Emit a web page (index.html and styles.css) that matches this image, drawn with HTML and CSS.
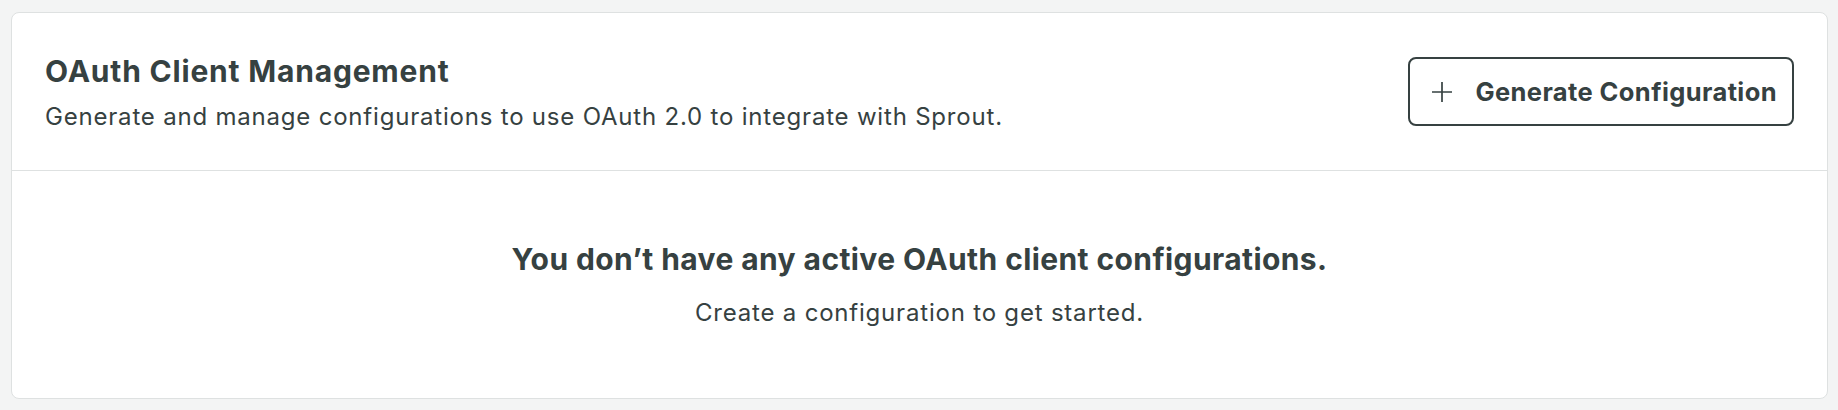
FILE: index.html
```html
<!DOCTYPE html>
<html lang="en">
<head>
<meta charset="utf-8">
<title>OAuth Client Management</title>
<link rel="stylesheet" href="styles.css">
</head>
<body>
  <section class="card">
    <header class="card-header">
      <div class="header-text">
        <h1 class="title">OAuth Client Management</h1>
        <p class="subtitle">Generate and manage configurations to use OAuth 2.0 to integrate with Sprout.</p>
      </div>
      <button class="btn-outline" type="button">
        <svg class="btn-icon" viewBox="0 0 20 20" width="20" height="20" aria-hidden="true">
          <path d="M10 0v20M0 10h20" stroke="currentColor" stroke-width="1.7" fill="none"/>
        </svg>
        <span>Generate Configuration</span>
      </button>
    </header>
    <div class="empty">
      <h2 class="empty-title">You don’t have any active OAuth client configurations.</h2>
      <p class="empty-text">Create a configuration to get started.</p>
    </div>
  </section>
</body>
</html>
```

FILE: styles.css
```css
* { box-sizing: border-box; }
html, body {
  margin: 0;
  padding: 0;
}
body {
  background: #f3f4f4;
  font-family: Inter, "Noto Sans", sans-serif;
  color: #364141;
  padding: 12px 10px 0 11px;
}
.card {
  background: #ffffff;
  border: 1px solid #dee1e1;
  border-radius: 8px;
  height: 387px;
  display: flex;
  flex-direction: column;
}
.card-header {
  height: 158px;
  border-bottom: 1px solid #dee1e1;
  display: flex;
  align-items: center;
  justify-content: space-between;
  padding: 0 33px 0 33px;
}
.header-text {
  display: flex;
  flex-direction: column;
  gap: 13px;
  padding-top: 1px;
}
.title {
  margin: 0;
  font-size: 30px;
  line-height: 36px;
  font-weight: 700;
  letter-spacing: 0.8px;
}
.subtitle {
  margin: 0;
  font-size: 24px;
  line-height: 30px;
  font-weight: 400;
  letter-spacing: 0.8px;
}
.btn-outline {
  display: flex;
  align-items: center;
  gap: 23px;
  height: 69px;
  padding: 0 15px 0 22px;
  background: #ffffff;
  border: 2px solid #364141;
  border-radius: 8px;
  color: #364141;
  font-family: inherit;
  font-size: 25.5px;
  font-weight: 700;
  letter-spacing: 0.4px;
  cursor: pointer;
}
.btn-icon { flex: none; }
.empty {
  flex: 1;
  display: flex;
  flex-direction: column;
  align-items: center;
  justify-content: center;
  gap: 21px;
}
.empty-title {
  margin: 0;
  font-size: 30px;
  line-height: 36px;
  font-weight: 700;
  letter-spacing: 0.4px;
}
.empty-text {
  margin: 0;
  font-size: 24px;
  line-height: 30px;
  letter-spacing: 0.8px;
}
```
